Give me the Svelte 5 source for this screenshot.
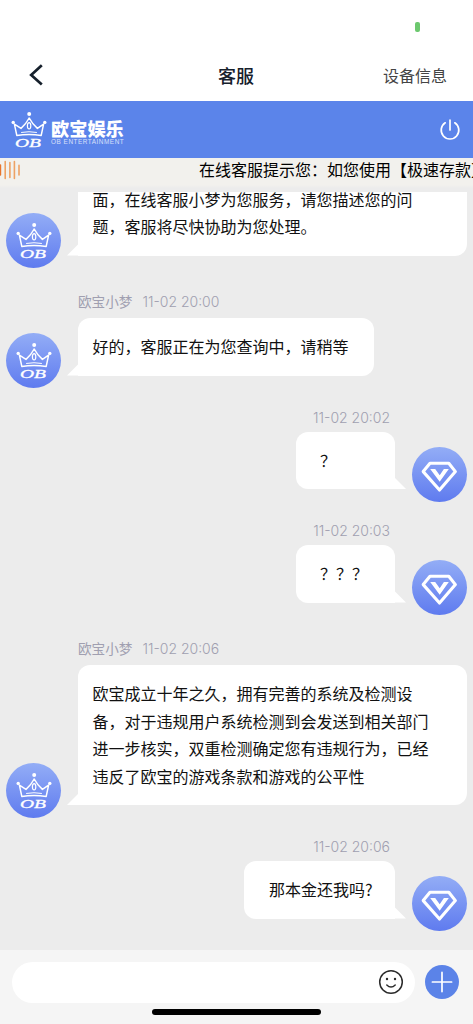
<script lang="ts">
  type Message = {
    from: "agent" | "user"
    time: string
    lines: string[]
  }

  const agentName = "欧宝小梦"

  let draft = $state("")

  const messages: Message[] = [
    {
      from: "agent",
      time: "",
      lines: [
        "面，在线客服小梦为您服务，请您描述您的问",
        "题，客服将尽快协助为您处理。",
      ],
    },
    {
      from: "agent",
      time: "11-02 20:00",
      lines: ["好的，客服正在为您查询中，请稍等"],
    },
    { from: "user", time: "11-02 20:02", lines: ["？"] },
    { from: "user", time: "11-02 20:03", lines: ["？？？"] },
    {
      from: "agent",
      time: "11-02 20:06",
      lines: [
        "欧宝成立十年之久，拥有完善的系统及检测设",
        "备，对于违规用户系统检测到会发送到相关部门",
        "进一步核实，双重检测确定您有违规行为，已经",
        "违反了欧宝的游戏条款和游戏的公平性",
      ],
    },
    { from: "user", time: "11-02 20:06", lines: ["那本金还我吗?"] },
  ]
</script>

{#snippet crown()}
  <svg class="crown" viewBox="0 0 36 37" width="36" height="37">
    <g fill="none" stroke="#fff" stroke-width="1.5" stroke-linejoin="round" stroke-linecap="round">
      <path d="M3.4 13.2 5.8 24.4Q18 22.4 30.2 24.4L32.6 13.2 26.4 17.4Q21.4 13 18.2 7 15 13 10 17.4Z" />
      <path d="M10.5 21.4Q18 20 25.5 21.4" stroke-width="1" />
      <ellipse cx="18.1" cy="14.8" rx="1.7" ry="3.2" stroke-width="1.2" />
    </g>
    <g fill="#fff">
      <circle cx="18.2" cy="3" r="2" />
      <circle cx="2.2" cy="11.4" r="1.7" />
      <circle cx="33.8" cy="11.4" r="1.7" />
    </g>
    <text x="4" y="35.8" textLength="26" lengthAdjust="spacingAndGlyphs">OB</text>
  </svg>
{/snippet}

{#snippet diamond()}
  <svg viewBox="0 0 55 55" width="55" height="55">
    <path
      d="M18 16.2H36.8L43.4 24.6 27.5 43 11.2 24.6Z"
      fill="none"
      stroke="#fff"
      stroke-width="3.1"
      stroke-linejoin="round"
    />
    <path d="M18.2 22H23.2L27.7 28.2 31.9 22H36.8L27.7 34.7Z" fill="#fff" />
  </svg>
{/snippet}

<div class="app" lang="zh-CN">
  <div class="status"><i class="recording"></i></div>

  <header class="nav">
    <button class="back" aria-label="返回">
      <svg viewBox="0 0 14 22" width="14" height="22">
        <path d="M12.8 1.2 2.2 10.9 12.8 20.4" fill="none" stroke="#16202c" stroke-width="2.7" />
      </svg>
    </button>
    <h1>客服</h1>
    <button class="device">设备信息</button>
  </header>

  <div class="brand">
    {@render crown()}
    <div class="brand-name">
      <strong>欧宝娱乐</strong>
      <span>OB ENTERTAINMENT</span>
    </div>
    <button class="power" aria-label="退出">
      <svg viewBox="0 0 22 22" width="22" height="22">
        <path
          d="M6.2 3.8A8.8 8.8 0 1 0 15.8 3.8M11 1V11"
          fill="none"
          stroke="#fff"
          stroke-width="1.7"
          stroke-linecap="round"
        />
      </svg>
    </button>
  </div>

  <div class="notice">
    <svg viewBox="0 0 22 20" width="22" height="20">
      <g stroke="#eea264" stroke-width="1.6" stroke-linecap="round">
        <path d="M.4 5V15" stroke="#e8752c" />
        <path d="M5.2 1.6V18.4M9.9 2.6V17.4M14.4 1.6V18.4M19 5.4V15" />
      </g>
    </svg>
    <p>在线客服提示您：如您使用【极速存款】</p>
  </div>

  <main class="chat">
    {#each messages as message}
      <div class="message {message.from}">
        {#if message.from === "agent"}
          <div class="avatar">{@render crown()}</div>
        {/if}
        <div class="content">
          {#if message.time}
            <div class="meta">
              {#if message.from === "agent"}<span>{agentName}</span>{/if}
              <time>{message.time}</time>
            </div>
          {/if}
          <div class="bubble" class:full={message.lines.length > 1}>
            {#each message.lines as line}
              <p>{line}</p>
            {/each}
          </div>
        </div>
        {#if message.from === "user"}
          <div class="avatar">{@render diamond()}</div>
        {/if}
      </div>
    {/each}
  </main>

  <footer>
    <div class="composer">
      <div class="field">
        <input bind:value={draft} aria-label="消息" />
        <svg viewBox="0 0 26 26" width="26" height="26">
          <circle cx="13" cy="13" r="11.3" fill="none" stroke="#2b2b2b" stroke-width="1.5" />
          <circle cx="9" cy="10" r="1.2" fill="#2b2b2b" />
          <circle cx="17" cy="10" r="1.2" fill="#2b2b2b" />
          <path d="M8.8 16Q13 20.2 17.2 16" fill="none" stroke="#2b2b2b" stroke-width="1.5" stroke-linecap="round" />
        </svg>
      </div>
      <button class="add" aria-label="更多">
        <svg viewBox="0 0 34 34" width="34" height="34">
          <path d="M17 7.4V26.6M7.4 17H26.6" stroke="#fff" stroke-width="1.7" stroke-linecap="round" />
        </svg>
      </button>
    </div>
    <div class="home-bar"></div>
  </footer>
</div>

<style>
  :global(body) {
    margin: 0;
  }
  .app {
    width: 473px;
    height: 1024px;
    display: flex;
    flex-direction: column;
    overflow: hidden;
    background: #fff;
    color: #111;
    font-family: "Noto Sans CJK SC", sans-serif;
    font-size: 16px;
  }
  p,
  h1 {
    margin: 0;
  }
  svg {
    display: block;
    flex-shrink: 0;
  }
  button {
    padding: 0;
    border: none;
    background: none;
    color: inherit;
    font: inherit;
  }
  .status {
    height: 50px;
    display: flex;
    justify-content: flex-end;
    padding: 21.5px 53px 0 0;
    box-sizing: border-box;
  }
  .recording {
    width: 5px;
    height: 10.5px;
    border-radius: 2px;
    background: #6cc86e;
  }
  .nav {
    height: 50.5px;
    display: grid;
    grid-template-columns: 1fr auto 1fr;
    align-items: center;
    padding: 0 26px 0 28px;
    box-sizing: border-box;
  }
  .back {
    justify-self: start;
    margin-left: 1px;
  }
  .nav h1 {
    margin: 0 3px 1px 0;
    font-size: 18px;
    line-height: 26px;
    font-weight: 500;
    color: #16202c;
  }
  .device {
    justify-self: end;
    line-height: 24px;
    color: #444;
  }
  .brand {
    height: 57px;
    display: flex;
    align-items: center;
    padding: 0 12px 0 11px;
    box-sizing: border-box;
    background: #5b84ea;
    color: #fff;
  }
  .crown {
    overflow: visible;
  }
  .crown text {
    fill: #fff;
    stroke: #fff;
    stroke-width: 0.3px;
    font: italic 12.5px "Liberation Serif", serif;
  }
  .brand-name {
    display: flex;
    flex-direction: column;
    margin: 2px 0 0 4px;
  }
  .brand-name strong {
    font-size: 18.2px;
    line-height: 26px;
    font-weight: 900;
  }
  .brand-name span {
    margin-top: -3px;
    font-family: "Liberation Sans", sans-serif;
    font-size: 6.4px;
    line-height: 8px;
    letter-spacing: 0.53px;
    opacity: 0.75;
    white-space: nowrap;
  }
  .power {
    margin: 1px 0 0 auto;
  }
  .notice {
    height: 34.5px;
    display: flex;
    align-items: flex-start;
    box-sizing: border-box;
    padding-top: 2.5px;
    background: linear-gradient(#f2f1ed 27px, #ececec 30px);
  }
  .notice p {
    margin: -2px 0 0 177px;
    line-height: 22px;
    white-space: nowrap;
    color: #000;
  }
  .chat {
    height: 758px;
    display: flex;
    flex-direction: column;
    justify-content: flex-end;
    gap: 15.5px;
    box-sizing: border-box;
    padding: 0 6px 19px;
    overflow: hidden;
    background: #ececec;
  }
  .message {
    display: flex;
    align-items: flex-end;
    gap: 17px;
  }
  .message.user {
    justify-content: flex-end;
  }
  .avatar {
    width: 55px;
    height: 55px;
    flex-shrink: 0;
    display: flex;
    align-items: center;
    justify-content: center;
    border-radius: 50%;
    background: linear-gradient(#93adf6, #5f7bef);
  }
  .content {
    display: flex;
    flex-direction: column;
    align-items: flex-start;
    padding-bottom: 12.5px;
  }
  .user .content {
    align-items: flex-end;
  }
  .meta {
    display: flex;
    gap: 10px;
    padding-top: 1.5px;
    font-size: 13.6px;
    line-height: 33px;
    color: #a09fb0;
    white-space: nowrap;
  }
  .user .meta {
    padding: 0 5px 0 0;
    line-height: 28px;
  }
  .meta time {
    font-family: Inter, sans-serif;
    font-size: 14px;
    font-weight: 300;
  }
  .bubble {
    position: relative;
    box-sizing: border-box;
    padding: 15px 25px 15px 14.5px;
    border-radius: 12px 12px 12px 0;
    background: #fff;
  }
  .bubble.full {
    width: 389px;
  }
  .user .bubble {
    min-width: 99.5px;
    padding: 15px 22.5px 15px 24.5px;
    border-radius: 12px 12px 0 12px;
  }
  .bubble::after {
    content: "";
    position: absolute;
    bottom: 0;
    left: -11px;
    width: 11.5px;
    height: 11.5px;
    background: #fff;
    clip-path: polygon(100% 0, 100% 100%, 0 100%);
  }
  .user .bubble::after {
    left: auto;
    right: -11px;
    clip-path: polygon(0 0, 100% 100%, 0 100%);
  }
  .bubble p {
    line-height: 27.5px;
    white-space: nowrap;
  }
  footer {
    flex: 1;
    background: #f5f5f5;
  }
  .composer {
    display: flex;
    align-items: center;
    gap: 10px;
    padding: 12px 14px 0 11.5px;
  }
  .field {
    flex: 1;
    height: 41px;
    display: flex;
    align-items: center;
    box-sizing: border-box;
    padding: 0 11px 2px 18px;
    border-radius: 21px;
    background: #fff;
  }
  .field input {
    flex: 1;
    min-width: 0;
    border: none;
    outline: none;
    background: none;
    font: inherit;
  }
  .add {
    margin-bottom: 2px;
    border-radius: 50%;
    background: #5b83e8;
  }
  .home-bar {
    width: 169px;
    height: 5.5px;
    margin: 6px auto 0;
    border-radius: 3px;
    background: #000;
  }
</style>
